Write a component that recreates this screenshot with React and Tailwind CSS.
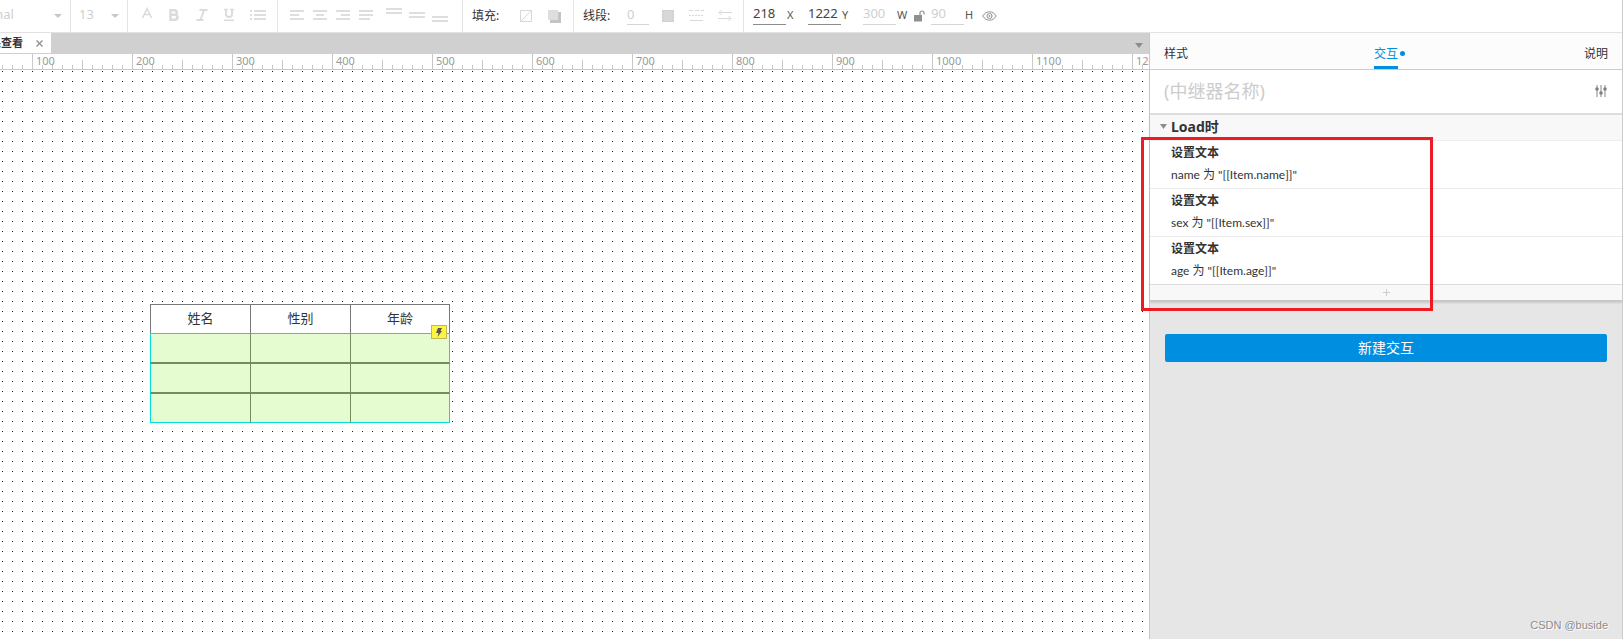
import React, { useState } from 'react';

const LATIN = "font-['Noto_Sans','Noto_Sans_CJK_SC',sans-serif]";

const rulerMarks = [0, 100, 200, 300, 400, 500, 600, 700, 800, 900, 1000, 1100, 1200];

const actions = [
  { id: 1, title: '设置文本', target: 'name', value: '"[[Item.name]]"' },
  { id: 2, title: '设置文本', target: 'sex', value: '"[[Item.sex]]"' },
  { id: 3, title: '设置文本', target: 'age', value: '"[[Item.age]]"' },
];

const Caret = ({ className = 'h-1 w-2' }) => (
  <svg viewBox="0 0 8 4" preserveAspectRatio="none" className={`shrink-0 fill-current ${className}`} aria-hidden="true">
    <path d="M0 0h8L4 4z" />
  </svg>
);

// rects: [x, y, width, height]
const BarsIcon = ({ width, rects }) => (
  <svg width={width} height="32" fill="#dedede" shapeRendering="crispEdges" aria-hidden="true">
    {rects.map(([x, y, w, h]) => <rect key={`${x}-${y}`} x={x} y={y} width={w} height={h} />)}
  </svg>
);

const textAligns = [
  { label: 'Align left', width: 14, rects: [[0, 10, 14, 2], [0, 14, 9, 2], [0, 18, 14, 2]] },
  { label: 'Align center', width: 14, rects: [[0, 10, 14, 2], [3, 14, 8, 2], [0, 18, 14, 2]] },
  { label: 'Align right', width: 14, rects: [[0, 10, 14, 2], [5, 14, 9, 2], [0, 18, 14, 2]] },
  { label: 'Justify', width: 14, rects: [[0, 10, 14, 2], [0, 14, 14, 2], [0, 18, 11, 2]] },
];

const verticalAligns = [
  { label: 'Align top', width: 16, rects: [[0, 8, 16, 2], [0, 12, 16, 2]] },
  { label: 'Align middle', width: 16, rects: [[0, 12, 16, 2], [0, 16, 16, 2]] },
  { label: 'Align bottom', width: 16, rects: [[0, 16, 16, 2], [0, 20, 16, 2]] },
];

const NumberField = ({ id, label, value, disabled }) => (
  <div className="flex items-center">
    <input
      id={id}
      defaultValue={value}
      className={`h-[18px] w-[33px] border-b bg-transparent pb-[3px] text-[13px] outline-none ${disabled ? 'border-[#d4d4d4] text-[#cfcfcf]' : 'border-[#8c8c8c] text-[#444]'}`}
    />
    <label htmlFor={id} className="w-3 pb-0.5 pl-px text-[11px] text-[#555]">{label}</label>
  </div>
);

const Toolbar = () => (
  <header className={`flex h-[33px] shrink-0 items-stretch overflow-hidden border-b border-[#e2e2e2] bg-white ${LATIN}`}>
    <div className="relative flex w-[71px] items-center border-r border-[#e4e4e4] pb-[3px]">
      <select aria-label="Font style" defaultValue="Normal" className="-ml-8 w-[94px] shrink-0 appearance-none bg-transparent text-[13px] text-[#cfcfcf] outline-none">
        <option>Normal</option>
      </select>
      <Caret className="pointer-events-none absolute right-2 top-[14px] h-1 w-2 text-[#c8c8c8]" />
    </div>
    <div className="relative flex w-[57px] items-center border-r border-[#e4e4e4] pb-[3px] pl-2">
      <select aria-label="Font size" defaultValue="13" className="w-10 appearance-none bg-transparent text-[13px] text-[#cfcfcf] outline-none">
        <option>13</option>
      </select>
      <Caret className="pointer-events-none absolute right-2 top-[14px] h-1 w-2 text-[#c8c8c8]" />
    </div>

    <div className="flex w-[150px] items-center justify-between border-r border-[#e4e4e4] pl-[13px] pr-[11px]">
      <button aria-label="Text color">
        <svg width="12" height="32" fill="none" stroke="#dcdcdc" strokeWidth="1.6"><path d="M1.500 18 6 8.500 10.500 18M3 14.500h6" /></svg>
      </button>
      <button aria-label="Bold">
        <svg width="12" height="32" fill="none" stroke="#dcdcdc" strokeWidth="2.600"><path d="M2.500 10.300h4a2.200 2.200 0 0 1 0 4.500h-4zM2.500 14.800h5a2.500 2.500 0 0 1 0 4.900h-5z" /></svg>
      </button>
      <button aria-label="Italic">
        <svg width="12" height="32" fill="none" stroke="#dcdcdc" strokeWidth="2"><path d="M3.500 10h8M0.500 20h7M8 10 4.500 20" /></svg>
      </button>
      <button aria-label="Underline">
        <svg width="12" height="32" fill="none" stroke="#dcdcdc"><path strokeWidth="2" d="M3 9v5a3 3 0 0 0 6 0V9" /><path strokeWidth="1.500" d="M1 9.500h4M7 9.500h4M1 20.200h10" /></svg>
      </button>
      <button aria-label="Bulleted list">
        <BarsIcon width={16} rects={[[0, 10, 2, 2], [4, 10, 12, 2], [0, 14, 2, 2], [4, 14, 12, 2], [0, 18, 2, 2], [4, 18, 12, 2]]} />
      </button>
    </div>

    <div className="flex w-[185px] items-center justify-between border-r border-[#e4e4e4] pl-3 pr-[14px]">
      {textAligns.map((a) => (
        <button key={a.label} aria-label={a.label}><BarsIcon width={a.width} rects={a.rects} /></button>
      ))}
      <div className="ml-1 flex gap-[7px]">
        {verticalAligns.map((a) => (
          <button key={a.label} aria-label={a.label}><BarsIcon width={a.width} rects={a.rects} /></button>
        ))}
      </div>
    </div>

    <div className="flex w-[111px] items-center border-r border-[#e4e4e4] pl-[9px] text-xs text-[#333]">
      <span className="w-7 whitespace-nowrap">填充:</span>
      <button aria-label="Fill color" className="ml-5">
        <svg width="12" height="12" fill="none" stroke="#d8d8d8"><path d="M.5.5h11v11H.5zM1 11 11 1" /></svg>
      </button>
      <button aria-label="Shadow" className="ml-4">
        <svg width="13" height="13"><path fill="#c4c4c4" d="M2 2h11v11H2z" /><path fill="#dedede" d="M0 0h10v10H0z" /></svg>
      </button>
    </div>

    <div className="flex w-[170px] items-center border-r border-[#e4e4e4] pl-[9px] text-xs text-[#333]">
      <label htmlFor="line-width" className="w-7 whitespace-nowrap">线段:</label>
      <input id="line-width" defaultValue="0" className="ml-4 h-[18px] w-[22px] border-b border-[#d4d4d4] bg-transparent pb-[3px] text-[13px] text-[#cfcfcf] outline-none" />
      <button aria-label="Line color" className="ml-[13px] size-3 border border-[#d0d0d0] bg-[#d8d8d8]" />
      <button aria-label="Line style" className="ml-[15px]">
        <svg width="15" height="12" stroke="#d8d8d8"><path strokeDasharray="4 2" d="M0 .5h15" /><path strokeDasharray="2 1" d="M0 5.500h15" /><path d="M1 10.500h13" /></svg>
      </button>
      <button aria-label="Arrow style" className="ml-[14px]">
        <svg width="14" height="12" fill="none" stroke="#d8d8d8"><path d="M14 2.500H1M3.500 0 1 2.500 3.500 5M0 8.500h13M10.500 6 13 8.500 10.500 11" /></svg>
      </button>
    </div>

    <div className="flex items-center gap-1.5 pl-[9px]">
      <div className="flex items-center gap-[10px]">
        <NumberField id="pos-x" label="X" value="218" />
        <NumberField id="pos-y" label="Y" value="1222" />
        <NumberField id="size-w" label="W" value="300" disabled />
      </div>
      <button aria-label="Lock aspect ratio">
        <svg width="11" height="12" viewBox="0 0 11 12"><path fill="#8f8f8f" d="M0 5h8v6.500H0z" /><path fill="none" stroke="#8f8f8f" strokeWidth="1.200" d="M6 5V3a2 2 0 0 1 4 0v1.500" /></svg>
      </button>
      <NumberField id="size-h" label="H" value="90" disabled />
      <button aria-label="Toggle visibility">
        <svg width="15" height="10" fill="none" stroke="#8f8f8f"><path d="M.7 5C4.300-.6 10.700-.6 14.300 5 10.700 10.600 4.300 10.600.7 5z" /><circle cx="7.500" cy="5" r="2.500" /><circle cx="7.500" cy="5" r=".6" /></svg>
      </button>
    </div>
  </header>
);

const Ruler = () => (
  <div className={`relative h-4 shrink-0 overflow-hidden border-b border-[#c8c8c8] bg-white ${LATIN}`}>
    <svg className="absolute inset-0 h-full w-full" shapeRendering="crispEdges" aria-hidden="true">
      <defs>
        <pattern id="ruler-ticks" x="2" width="10" height="16" patternUnits="userSpaceOnUse">
          <rect y="11" width="1" height="4" fill="#c8c8c8" />
        </pattern>
        <pattern id="ruler-halves" x="82" width="100" height="16" patternUnits="userSpaceOnUse">
          <rect y="6" width="1" height="9" fill="#c8c8c8" />
        </pattern>
      </defs>
      <rect width="100%" height="100%" fill="url(#ruler-ticks)" />
      <rect width="100%" height="100%" fill="url(#ruler-halves)" />
    </svg>
    <div className="relative -ml-[68px] flex">
      {rulerMarks.map((mark) => (
        <span key={mark} className="h-[15px] w-[100px] shrink-0 border-l border-[#c8c8c8] pl-[3px] text-[11px] leading-[14px] text-[#999]">{mark > 0 && mark}</span>
      ))}
    </div>
  </div>
);

const Canvas = () => (
  <div className="relative flex-1 overflow-hidden bg-white">
    <svg className="absolute inset-0 h-full w-full" shapeRendering="crispEdges" aria-hidden="true">
      <defs>
        <pattern id="grid-dots" x="2" y="1" width="10" height="10" patternUnits="userSpaceOnUse">
          <rect width="1" height="1" fill="#0000c8" />
        </pattern>
      </defs>
      <rect width="100%" height="100%" fill="url(#grid-dots)" />
    </svg>

    <div className="absolute left-[150px] top-[234px] w-[300px]">
      <table className="w-full table-fixed border-separate border-spacing-0 font-['Noto_Sans_CJK_SC',sans-serif] text-[13px] text-[#333]">
        <thead>
          <tr className="h-[29px]">
            {['姓名', '性别', '年龄'].map((name) => (
              <th key={name} className="border-l border-t border-[#797979] bg-white p-0 pb-0.5 text-center font-normal leading-5 last:border-r">{name}</th>
            ))}
          </tr>
        </thead>
        <tbody>
          <tr className="h-[31px]">
            <td className="border-b-2 border-l border-t border-b-[#748c5c] border-l-[#00dede] border-t-[#00dede] bg-[#e4fcd0] p-0" />
            <td className="border-b-2 border-l border-t border-b-[#748c5c] border-l-[#748c5c] border-t-[#00dede] bg-[#e4fcd0] p-0" />
            <td className="border-x border-b-2 border-t border-b-[#748c5c] border-l-[#748c5c] border-r-[#00dede] border-t-[#00dede] bg-[#e4fcd0] p-0" />
          </tr>
          <tr className="h-[30px]">
            <td className="border-b-2 border-l border-b-[#748c5c] border-l-[#00dede] bg-[#e4fcd0] p-0" />
            <td className="border-b-2 border-l border-[#748c5c] bg-[#e4fcd0] p-0" />
            <td className="border-x border-b-2 border-b-[#748c5c] border-l-[#748c5c] border-r-[#00dede] bg-[#e4fcd0] p-0" />
          </tr>
          <tr className="h-[29px]">
            <td className="border-b border-l border-[#00dede] bg-[#e4fcd0] p-0" />
            <td className="border-b border-l border-b-[#00dede] border-l-[#748c5c] bg-[#e4fcd0] p-0" />
            <td className="border-x border-b border-b-[#00dede] border-l-[#748c5c] border-r-[#00dede] bg-[#e4fcd0] p-0" />
          </tr>
        </tbody>
      </table>
      <span className="absolute right-[3px] top-[21px] flex h-[14px] w-4 items-center justify-center border border-[#bdb85a] bg-[#fff440]">
        <svg width="8" height="9" viewBox="0 0 8 9" fill="#555"><path d="M3 0h4L5.500 3H7L2.500 9l1-4H1z" /></svg>
      </span>
    </div>
  </div>
);

const Inspector = () => {
  const [tab, setTab] = useState('交互');

  return (
    <aside className={`relative flex w-[473px] shrink-0 flex-col border-l border-[#c8c8c8] bg-[#e6e6e6] text-[#333] ${LATIN}`}>
      <nav className="flex h-[37px] shrink-0 items-stretch justify-between border-b border-[#ccc] bg-[#fcfcfc] px-[14px] text-xs">
        {['样式', '交互', '说明'].map((name) => (
          <button
            key={name}
            onClick={() => setTab(name)}
            className={`relative border-b-[3px] pt-2 ${tab === name ? 'border-[#008fe0] text-[#008fe0]' : 'border-transparent'}`}
          >
            {name}
            {name === '交互' && <span className="absolute -right-[7px] top-[18px] size-[5px] rounded-full bg-[#008fe0]" />}
          </button>
        ))}
      </nav>

      <div className="flex h-[45px] shrink-0 items-center justify-between border-b-2 border-[#dedede] bg-white pb-0.5 pl-[14px] pr-[15px]">
        <input aria-label="Widget name" placeholder="(中继器名称)" className="w-60 bg-transparent text-lg outline-none placeholder:text-[#ccc]" />
        <button aria-label="Settings">
          <svg width="12" height="12"><path stroke="#b0b0b0" strokeWidth="1.500" d="M2 0v12M6 0v12M10 0v12" /><g fill="#808080"><circle cx="2" cy="4" r="1.800" /><circle cx="6" cy="8" r="1.800" /><circle cx="10" cy="4" r="1.800" /></g></svg>
        </button>
      </div>

      <section className="shrink-0 border-b-2 border-[#c8c8c8] bg-white shadow-[0_1px_2px_rgba(0,0,0,0.12)]">
        <h2 className="flex h-[26px] items-center border-b border-[#eee] bg-[#f8f8f8] pb-0.5 pl-[10px] text-sm font-bold">
          <Caret className="mr-1 h-[5px] w-[7px] text-[#8c8c8c]" />
          Load时
        </h2>
        <ul>
          {actions.map((action) => (
            <li key={action.id} className="h-12 border-b border-[#ebebeb] pl-[21px] last:border-[#dcdcdc]">
              <h3 className="text-xs leading-6 font-bold">{action.title}</h3>
              <p className="font-['Lato','Noto_Sans_CJK_SC',sans-serif] text-xs leading-5">{action.target} 为 {action.value}</p>
            </li>
          ))}
        </ul>
        <button aria-label="Add action" className="flex h-[15px] w-full items-center justify-center bg-[#f8f8f8]">
          <svg width="7" height="7" stroke="#ccc"><path d="M3.500 0v7M0 3.500h7" /></svg>
        </button>
      </section>

      <button className="mx-[15px] mt-8 h-7 shrink-0 rounded-xs bg-[#008fe0] text-sm text-white">新建交互</button>

      <div className="pointer-events-none absolute -left-[9px] top-[104px] h-[174px] w-[292px] border-[3px] border-[#ed1c24]" />
      <span className="absolute bottom-1.5 right-[14px] font-['Liberation_Sans',sans-serif] text-[11px] text-[#8c8c8c] [text-shadow:1px_1px_0_#fff]">CSDN @buside</span>
    </aside>
  );
};

export default function App() {
  return (
    <div className="flex h-screen flex-col overflow-hidden border-r border-[#ccc] bg-white">
      <Toolbar />
      <div className="flex min-h-0 flex-1">
        <main className="flex min-w-0 flex-1 flex-col">
          <div className="flex h-[21px] shrink-0 items-start justify-between overflow-hidden bg-[#d0d0d0]">
            <div className="flex h-5 w-[51px] items-center justify-between bg-white pr-2 font-['Noto_Sans_CJK_SC',sans-serif] text-[11px] font-bold text-[#333]">
              <span className="-ml-[10px] whitespace-nowrap pb-0.5">果查看</span>
              <button aria-label="Close tab">
                <svg width="7" height="7" stroke="#8c8c8c" strokeWidth="1.200"><path d="m.5.5 6 6M6.500.5l-6 6" /></svg>
              </button>
            </div>
            <button aria-label="Show all tabs" className="mr-[6px] mt-[10px]">
              <Caret className="h-[5px] w-2 text-[#8c8c8c]" />
            </button>
          </div>
          <Ruler />
          <Canvas />
        </main>
        <Inspector />
      </div>
    </div>
  );
}
